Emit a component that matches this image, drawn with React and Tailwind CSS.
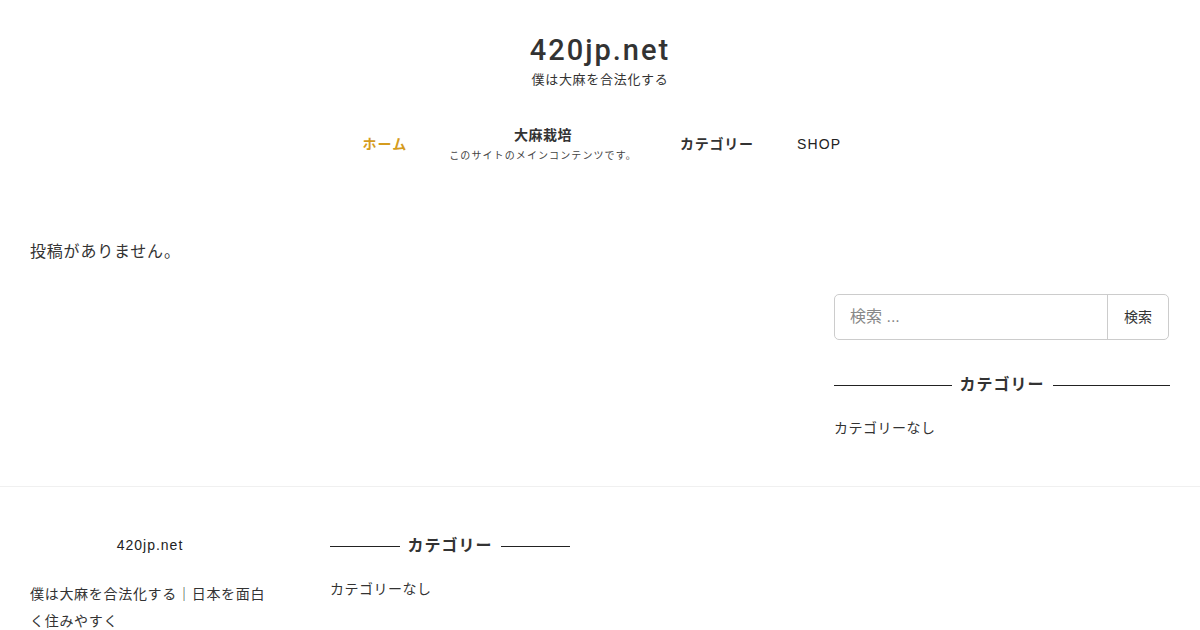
import React from 'react';

const font = { fontFamily: '"Liberation Sans", "Noto Sans CJK JP", sans-serif' };

const WidgetTitle = ({ children }) => (
  <div className="flex items-center">
    <span className="flex-1 h-px bg-[#222]" />
    <h3 className="px-2 text-base font-bold text-[#333] leading-none tracking-[1px]">{children}</h3>
    <span className="flex-1 h-px bg-[#222]" />
  </div>
);

export default function App() {
  return (
    <div className="w-[1200px] h-[630px] overflow-hidden bg-white text-[#333]" style={font}>
      {/* Header */}
      <header className="flex flex-col items-center pt-[31px]">
        <h1
          className="text-[29px] leading-[38px] font-medium tracking-[2px] text-[#333]"
          style={{ fontFamily: 'Roboto, "Liberation Sans", sans-serif' }}
        >
          420jp.net
        </h1>
        <p className="mt-[3px] text-[13px] leading-[16px] tracking-[0.7px] text-[#333]">僕は大麻を合法化する</p>
        <nav className="mt-[34px] ml-[4px] flex items-start text-sm font-bold">
          <a className="pl-[22px] pr-[21px] pt-[12px] text-[#d59c1e] tracking-[1px]">ホーム</a>
          <a className="px-[21px] flex flex-col items-center">
            <span className="leading-[18px] mt-[4px] tracking-[0.5px]">大麻栽培</span>
            <span className="mt-[6px] text-[10px] leading-[12px] font-normal tracking-[1.1px] text-[#444]">このサイトのメインコンテンツです。</span>
          </a>
          <a className="pl-[22px] pr-[22px] pt-[12px] tracking-[0.8px]">カテゴリー</a>
          <a className="pl-[21px] pr-[22px] pt-[12px] font-normal tracking-[1.2px] text-[#222]">SHOP</a>
        </nav>
      </header>

      {/* Content */}
      <div className="mt-[59px] px-[30px] flex justify-between">
        <main className="pt-[19px]">
          <p className="text-base text-[#333] tracking-[0.8px]">投稿がありません。</p>
        </main>
        <aside className="w-[336px] pt-[73px]">
          <form className="flex h-[46px] w-[335px] rounded-[5px] border border-[#ccc]">
            <input
              placeholder="検索 ..."
              className="flex-1 min-w-0 px-[15px] text-base text-[#333] placeholder:text-[#888] outline-none bg-transparent"
              style={font}
            />
            <button type="button" className="w-[61px] border-l border-[#ccc] text-sm text-[#333]" style={font}>
              検索
            </button>
          </form>
          <div className="mt-[37px]">
            <WidgetTitle>カテゴリー</WidgetTitle>
          </div>
          <p className="mt-[25px] text-sm tracking-[0.5px]">カテゴリーなし</p>
        </aside>
      </div>

      {/* Footer */}
      <footer className="mt-[48px] border-t border-[#f0f0f0] px-[30px] pt-[48px] flex gap-[60px]">
        <div className="w-[240px]">
          <p className="text-center text-sm tracking-[1px] text-[#222]">420jp.net</p>
          <p className="mt-[26px] text-sm leading-[27px] tracking-[0.7px]">僕は大麻を合法化する｜日本を面白く住みやすく</p>
        </div>
        <div className="w-[240px] pt-[3px]">
          <WidgetTitle>カテゴリー</WidgetTitle>
          <p className="mt-[25px] text-sm tracking-[0.5px]">カテゴリーなし</p>
        </div>
      </footer>
    </div>
  );
}
